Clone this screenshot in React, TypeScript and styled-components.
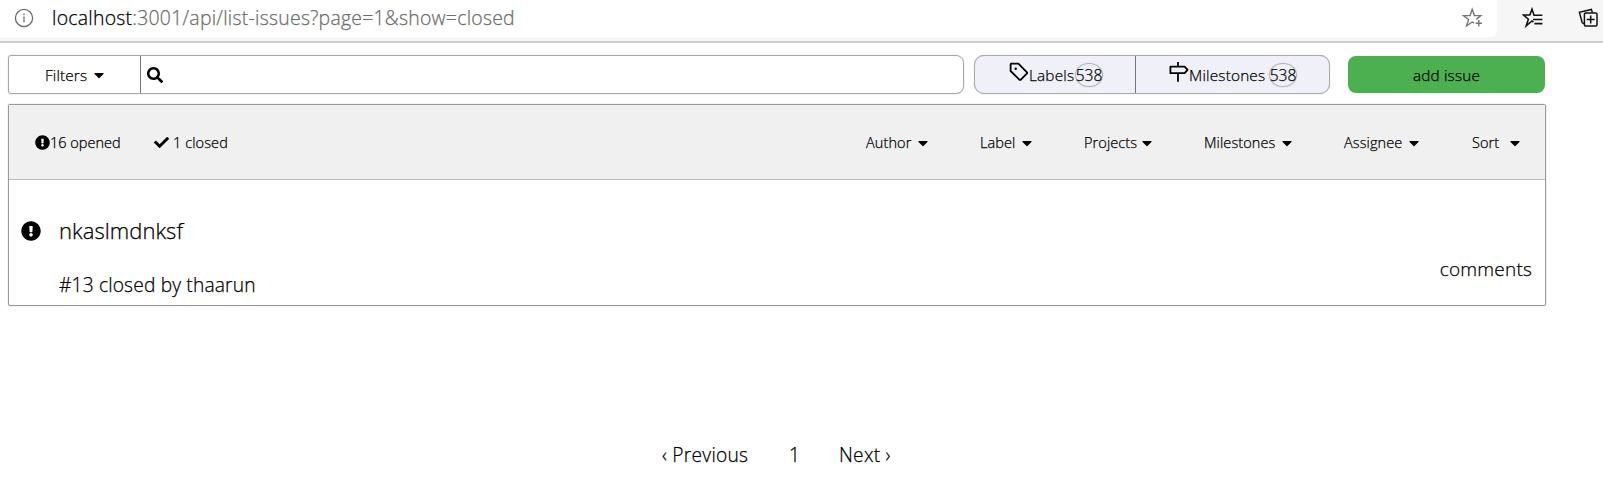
import React from "react";
import styled, { createGlobalStyle } from "styled-components";
import { FaCaretDown, FaCheck, FaExclamationCircle, FaSearch } from "react-icons/fa";

const GlobalStyle = createGlobalStyle`
  * { box-sizing: border-box; }
  body {
    margin: 0;
    background: #fff;
    color: #000;
    font-family: "Open Sans", "Noto Sans", sans-serif;
    font-weight: 300;
    -webkit-text-stroke: 0.25px currentColor;
    overflow: hidden;
  }
  svg { display: block; flex: none; }
`;

const Page = styled.div`
  width: 1603px;
  height: 482px;
  overflow: hidden;
`;

const BrowserBar = styled.header`
  display: flex;
  align-items: flex-start;
  height: 43px;
  background: #f6f6f6;
  border-bottom: 2px solid #cfcfcf;
`;

const AddressField = styled.div`
  display: flex;
  align-items: center;
  width: 1497px;
  height: 37px;
  padding: 0 14px 2px;
  background: #fff;
  border-radius: 0 0 6px 0;
  color: #6c6c6c;
`;

const Text = styled.span<{ $size?: number; $track?: number; $w?: number }>`
  display: block;
  flex: none;
  white-space: nowrap;
  font-size: ${(p) => p.$size ?? 14.5}px;
  letter-spacing: ${(p) => p.$track ?? 0}px;
  line-height: 24px;
  ${(p) => (p.$w ? `width: ${p.$w}px;` : "")}
`;

const Url = styled(Text)`
  margin-left: 18px;
  flex: 1;
  b { font-weight: inherit; color: #000; -webkit-text-stroke-color: #000; }
`;

const BarActions = styled.div`
  display: flex;
  gap: 34px;
  padding: 7px 0 0 25px;
`;

const Toolbar = styled.div`
  display: flex;
  align-items: center;
  height: 39px;
  margin: 12px 0 0 8px;
`;

const SearchBox = styled.div`
  display: flex;
  width: 956px;
  height: 39px;
  border: 1px solid #a6a6a6;
  border-radius: 3px 8px 8px 3px;
  box-shadow: 0 0 1px #999;
`;

const FilterButton = styled.div`
  display: flex;
  align-items: center;
  width: 132px;
  padding-left: 36px;
  border-right: 1px solid #777;
`;

const SearchField = styled.div`
  display: flex;
  align-items: center;
  padding-left: 6px;
`;

const TabGroup = styled.div`
  display: flex;
  width: 356px;
  height: 39px;
  margin-left: 10px;
  background: #f0f0f8;
  border: 1px solid #aaa;
  border-radius: 10px;
  box-shadow: 0 0 1px #aaa;
`;

const Tab = styled.div<{ $w: number; $pad: number }>`
  display: flex;
  align-items: center;
  width: ${(p) => p.$w}px;
  padding-left: ${(p) => p.$pad}px;
  & + & { border-left: 1px solid #777; }
  svg { margin-bottom: 6px; }
`;

const Count = styled.span`
  display: flex;
  align-items: center;
  justify-content: center;
  width: 28px;
  height: 24px;
  border: 1px solid #b4b4b8;
  border-radius: 50%;
  box-shadow: 0 0 1px #aaa;
`;

const AddButton = styled.div`
  display: flex;
  align-items: center;
  justify-content: center;
  width: 197px;
  height: 37px;
  margin-left: 18px;
  background: #4caf50;
  border-radius: 8px;
`;

const Panel = styled.main`
  width: 1538px;
  height: 202px;
  margin: 10px 0 0 8px;
  border: 1px solid #999;
  border-radius: 2px;
  box-shadow: 0 0 1px #888;
`;

const PanelHeader = styled.div`
  display: flex;
  align-items: center;
  height: 75px;
  padding: 1px 0 0 26px;
  background: #f0f0f0;
  border-bottom: 1px solid #bbb;
`;

const Menus = styled.div`
  display: flex;
  margin-left: 637px;
`;

const Menu = styled.div<{ $w: number }>`
  display: flex;
  align-items: center;
  width: ${(p) => p.$w}px;
`;

const IssueRow = styled.div`
  display: flex;
  height: 125px;
  padding: 38px 13px 0 12px;
`;

const IssueBody = styled.div`
  flex: 1;
  margin-left: 18px;
`;

const IssueIcon = styled.span`
  margin-top: 3px;
`;

const Meta = styled(Text)`
  margin-top: 31px;
`;

const Comments = styled(Text)`
  margin-top: 39px;
`;

const Pagination = styled.nav`
  display: flex;
  margin: 137px 0 0 662px;
`;

const Caret = () => <FaCaretDown size={16} />;

const InfoIcon = () => (
  <svg width="20" height="20" viewBox="0 0 20 20" fill="none" stroke="#6a6a6a" strokeWidth="1.3">
    <circle cx="10" cy="10" r="8.6" />
    <path d="M10 8.6v5.6M10 5.6v1.6" />
  </svg>
);

const StarAddIcon = () => (
  <svg width="21" height="22" viewBox="0 0 21 22" fill="none" stroke="#777" strokeWidth="1.4">
    <path d="M14.2 12.4 18.8 8.6H12.4L10.2 2.4 8 8.6H1.4L6.6 12.4 4.6 18.8 10.2 15 12 16.2" />
    <path d="M16.8 13v6.4M13.6 16.2h6.4" />
  </svg>
);

const FavoritesIcon = () => (
  <svg width="22" height="22" viewBox="0 0 22 22" fill="none" stroke="#111" strokeWidth="1.6">
    <path d="M11.4 15.2 10 14 4.2 18.8 6.4 12.2 1.4 8H7.8L10 2.2 12 8.2H20.4M11 12.5H20.4M12.4 16.6H20.4" />
  </svg>
);

const CollectionsIcon = () => (
  <svg width="22" height="22" viewBox="0 0 22 22" fill="none" stroke="#111" strokeWidth="1.5">
    <rect x="6.4" y="6" width="12.6" height="13" rx="1.2" />
    <path d="M12.7 8.6v7.8M8.8 12.5h7.8M14.4 5.6 13.4 2.4 1.4 5.2 4.2 15.6l1.8 1.2" />
  </svg>
);

const TagIcon = () => (
  <svg width="20" height="20" viewBox="0 0 20 20" fill="none" stroke="#000" strokeWidth="1.8" strokeLinejoin="round">
    <path d="M2.2 1.6h7.2L18 10.4a.8.8 0 0 1 0 1L11.6 17.8a.8.8 0 0 1-1 0L1.6 9V2.2a.6.6 0 0 1 .6-.6Z" />
    <circle cx="6.7" cy="6.8" r="1.2" fill="#000" stroke="none" />
  </svg>
);

const MilestoneIcon = () => (
  <svg width="20" height="20" viewBox="0 0 20 20" fill="none" stroke="#000" strokeWidth="1.8" strokeLinejoin="round">
    <path d="M9 0v4.6M9 11.2v8.6M1.4 4.6h14.2L18.6 7.9l-3 3.3H1.4Z" />
  </svg>
);

const menus = [
  { name: "Author", text: 49, width: 114 },
  { name: "Label", text: 39, width: 104 },
  { name: "Projects", text: 55, width: 120 },
  { name: "Milestones", text: 75, width: 140 },
  { name: "Assignee", text: 62, width: 128 },
  { name: "Sort", text: 35, width: 60 },
];

export default function App() {
  return (
    <Page>
      <GlobalStyle />
      <BrowserBar>
        <AddressField>
          <InfoIcon />
          <Url $size={19.4} $track={0.26}>
            <b>localhost</b>:3001/api/list-issues?page=1&amp;show=closed
          </Url>
          <StarAddIcon />
        </AddressField>
        <BarActions>
          <FavoritesIcon />
          <CollectionsIcon />
        </BarActions>
      </BrowserBar>

      <Toolbar>
        <SearchBox>
          <FilterButton>
            <Text $size={15.3} $track={0.15} $w={46}>Filters</Text>
            <Caret />
          </FilterButton>
          <SearchField>
            <FaSearch size={16} />
          </SearchField>
        </SearchBox>
        <TabGroup>
          <Tab $w={160} $pad={34}>
            <TagIcon />
            <Text $size={15.3} $track={0.2} $w={46}>Labels</Text>
            <Count><Text $size={15.6}>538</Text></Count>
          </Tab>
          <Tab $w={194} $pad={33}>
            <MilestoneIcon />
            <Text $size={15.3} $track={0.2} $w={80}>Milestones</Text>
            <Count><Text $size={15.6}>538</Text></Count>
          </Tab>
        </TabGroup>
        <AddButton><Text $size={15.3} $track={0.2}>add issue</Text></AddButton>
      </Toolbar>

      <Panel>
        <PanelHeader>
          <FaExclamationCircle size={15} />
          <Text $w={104}>16 opened</Text>
          <FaCheck size={15} />
          <Text $w={60} $track={0.12}>&nbsp;1 closed</Text>
          <Menus>
            {menus.map((m) => (
              <Menu key={m.name} $w={m.width}>
                <Text $w={m.text} $track={0.1}>{m.name}</Text>
                <Caret />
              </Menu>
            ))}
          </Menus>
        </PanelHeader>
        <IssueRow>
          <IssueIcon><FaExclamationCircle size={20} /></IssueIcon>
          <IssueBody>
            <Text $size={22} $track={0.05}>nkaslmdnksf</Text>
            <Meta $size={19.2} $track={0.16}>#13 closed by thaarun</Meta>
          </IssueBody>
          <Comments $size={19} $track={0.2}>comments</Comments>
        </IssueRow>
      </Panel>

      <Pagination>
        <Text $size={19.2} $track={0.25} $w={127}>‹ Previous</Text>
        <Text $size={19.2} $w={50}>1</Text>
        <Text $size={19.2} $track={0.25}>Next ›</Text>
      </Pagination>
    </Page>
  );
}
